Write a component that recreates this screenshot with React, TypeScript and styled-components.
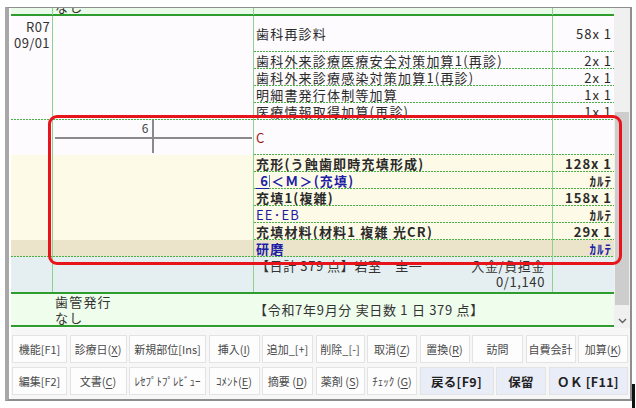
import React from "react";
import styled, { createGlobalStyle, css } from "styled-components";

const VLINE = "#8fd18f";
const THICK = "#2f9c2f";
const DASH = "#47b047";
const BLUE = "#1d1da6";

const GlobalStyle = createGlobalStyle`
  html, body { margin: 0; padding: 0; background: #ffffff; }
  body {
    font-family: "Noto Sans CJK JP", "Noto Sans", sans-serif;
    color: #2a2a2a;
  }
`;

const dashedBottom = css`
  background-image: repeating-linear-gradient(90deg, ${DASH} 0 2px, transparent 2px 3px);
  background-size: 100% 1px;
  background-position: left bottom;
  background-repeat: no-repeat;
`;

const Page = styled.div`
  position: relative;
  width: 636px;
  height: 408px;
  box-sizing: border-box;
  padding: 7px 0 0 5px;
  overflow: hidden;
`;

const Window = styled.div`
  width: 627px;
  height: 394px;
  box-sizing: border-box;
  border-top: 1px solid #8e8e8e;
  border-right: 2px solid #8e8e8e;
  border-bottom: 2px solid #8e8e8e;
  border-left: 4px solid #a8a8a8;
  padding-left: 2px;
  background: #ffffff;
  display: flex;
  flex-direction: column;
`;

const ListArea = styled.div`
  display: flex;
  height: 320px;
  flex-shrink: 0;
`;

const List = styled.div`
  flex: 1;
  overflow: hidden;
  background: #fdfbfd;
  font-size: 13px;
  line-height: 16px;
  letter-spacing: 1.2px;
  color: #2a2a2a;
`;

const Row = styled.div<{ $h: number; $bg: string; $dash?: boolean; $thick?: boolean; $top?: boolean }>`
  display: grid;
  grid-template-columns: 42px 201px 299px 1fr;
  height: ${(p) => p.$h}px;
  box-sizing: border-box;
  background-color: ${(p) => p.$bg};
  ${(p) => p.$dash && dashedBottom}
  ${(p) => p.$thick && css`border-bottom: 2px solid ${THICK};`}
  ${(p) => p.$top && css`margin-top: -25px;`}
`;

const DateCell = styled.div<{ $line?: boolean }>`
  border-right: ${(p) => (p.$line === false ? "none" : `1px solid ${VLINE}`)};
  text-align: right;
  padding: 3px 2px 0 0;
  letter-spacing: 0.4px;
  color: #333;
`;

const ChartCell = styled.div<{ $line?: boolean }>`
  border-right: ${(p) => (p.$line === false ? "none" : `1px solid ${VLINE}`)};
  padding-left: 2px;
  min-width: 0;
  color: #333;
`;

const ContentCell = styled.div<{ $dash?: boolean; $bold?: boolean; $color?: string; $line?: boolean }>`
  border-right: ${(p) => (p.$line === false ? "none" : `1px solid ${VLINE}`)};
  padding-left: 2px;
  display: flex;
  align-items: center;
  white-space: nowrap;
  overflow: hidden;
  font-weight: ${(p) => (p.$bold ? 700 : 400)};
  color: ${(p) => p.$color || "#2a2a2a"};
  ${(p) => p.$dash && dashedBottom}
`;

const PointsCell = styled.div<{ $dash?: boolean; $bold?: boolean; $color?: string }>`
  display: flex;
  align-items: center;
  justify-content: flex-end;
  padding-right: 2px;
  letter-spacing: 1px;
  white-space: pre;
  font-weight: ${(p) => (p.$bold ? 700 : 400)};
  color: ${(p) => p.$color || "#2a2a2a"};
  ${(p) => p.$dash && dashedBottom}
`;

const Chart = styled.div`
  display: grid;
  grid-template-columns: 1fr 1fr;
  grid-template-rows: 19px 14px;
  margin-right: 1px;
`;

const Quad = styled.div<{ $r?: boolean; $b?: boolean }>`
  border-right: ${(p) => (p.$r ? "2px solid #8a8a8a" : "none")};
  border-bottom: ${(p) => (p.$b ? "2px solid #8a8a8a" : "none")};
  display: flex;
  align-items: flex-end;
  justify-content: flex-end;
  padding: 0 3px 3px 0;
  font-size: 12px;
  line-height: 12px;
  letter-spacing: 0;
  color: #444;
`;

const Tooth = styled.span`
  text-decoration: underline;
  text-underline-offset: 2px;
`;

const Caret = styled.span`
  display: inline-block;
  width: 1px;
  height: 12px;
  margin: 0 1px 0 0;
  background: #6070b0;
`;

const SummaryBox = styled.div`
  display: flex;
  flex-direction: column;
  padding: 1px 7px 0 2px;
  border-right: 1px solid ${VLINE};
  color: #333;
  white-space: nowrap;
`;

const SummaryLine = styled.div<{ $end?: boolean }>`
  display: flex;
  justify-content: ${(p) => (p.$end ? "flex-end" : "space-between")};
  letter-spacing: 0.6px;
`;

const FooterText = styled.div`
  grid-column: span 2;
  display: flex;
  align-items: center;
  padding-left: 0;
  letter-spacing: 0.7px;
  color: #333;
  white-space: nowrap;
`;

const ScrollTrack = styled.div`
  width: 16px;
  background: #f0f0f0;
  display: flex;
  flex-direction: column;
  align-items: center;
`;

const ScrollThumb = styled.div`
  width: 14px;
  height: 193px;
  margin-top: 104px;
  background: #cdcdcd;
`;

const ScrollArrow = styled.div`
  margin-top: auto;
  margin-bottom: 3px;
  height: 8px;
  display: flex;
  align-items: center;
`;

const ButtonArea = styled.div`
  flex: 1;
  display: flex;
  flex-direction: column;
  gap: 4px;
  padding: 7px 0 0 1px;
  background: #f7f7f7;
`;

const ButtonRow = styled.div<{ $cols: string }>`
  display: grid;
  grid-template-columns: ${(p) => p.$cols};
  column-gap: 2.5px;
  height: 28px;
`;

const Btn = styled.div<{ $primary?: boolean }>`
  display: flex;
  align-items: center;
  justify-content: center;
  box-sizing: border-box;
  border: 1px solid #e3e3e3;
  background: ${(p) => (p.$primary ? "#e9edf8" : "#fdfdfd")};
  color: ${(p) => (p.$primary ? "#222" : "#4a4a4a")};
  font-size: ${(p) => (p.$primary ? 12.5 : 11)}px;
  font-weight: ${(p) => (p.$primary ? 700 : 400)};
  letter-spacing: ${(p) => (p.$primary ? "0.3px" : "0")};
  white-space: nowrap;
  overflow: hidden;
  u { text-underline-offset: 2px; }
`;

const RedFrame = styled.div`
  position: absolute;
  left: 48px;
  top: 115px;
  width: 574px;
  height: 150px;
  box-sizing: border-box;
  border: 3.5px solid #e8141c;
  border-radius: 9px;
  pointer-events: none;
`;

const EdgeMark = styled.div`
  position: absolute;
  left: 632px;
  top: 384px;
  width: 3px;
  height: 24px;
  background: #111;
`;

type Entry = { text: React.ReactNode; pts: string; h: number; bold?: boolean; color?: string };

const sectionA: Entry[] = [
  { text: "歯科再診料", pts: "58x 1", h: 36 },
  { text: "歯科外来診療医療安全対策加算1(再診)", pts: "2x 1", h: 17 },
  { text: "歯科外来診療感染対策加算1(再診)", pts: "2x 1", h: 17 },
  { text: "明細書発行体制等加算", pts: "1x 1", h: 17 },
];

const yellowRows: Entry[] = [
  { text: "充形(う蝕歯即時充填形成)", pts: "128x 1", h: 17, bold: true },
  {
    text: (
      <>
        <Tooth>&nbsp;6</Tooth>
        <Caret />＜Ｍ＞(充填)
      </>
    ),
    pts: "ｶﾙﾃ",
    h: 17,
    bold: true,
    color: BLUE,
  },
  { text: "充填1(複雑)", pts: "158x 1", h: 17, bold: true },
  { text: "EE･EB", pts: "ｶﾙﾃ", h: 17, color: BLUE },
  { text: "充填材料(材料1 複雑 光CR)", pts: "29x 1", h: 17, bold: true },
];

const row1 = "55px 57px 77px 51px 51px 49px 50px 50px 51px 50px 50px";
const row2 = "55px 57px 77px 51px 51px 49px 50px 74px 50px 79px";

export default function App() {
  return (
    <>
      <GlobalStyle />
      <Page>
        <Window>
          <ListArea>
            <List>
              <Row $h={33} $bg="#ebfbe9" $thick $top>
                <DateCell />
                <ChartCell>
                  <div>&nbsp;</div>
                  <div>なし</div>
                </ChartCell>
                <ContentCell />
                <PointsCell />
              </Row>

              {sectionA.map((e, i) => (
                <Row key={i} $h={e.h} $bg="#fdfbfd">
                  <DateCell>
                    {i === 0 && (
                      <>
                        R07
                        <br />
                        09/01
                      </>
                    )}
                  </DateCell>
                  <ChartCell />
                  <ContentCell $dash>{e.text}</ContentCell>
                  <PointsCell $dash>{e.pts}</PointsCell>
                </Row>
              ))}
              <Row $h={17} $bg="#fdfbfd" $dash>
                <DateCell />
                <ChartCell />
                <ContentCell>医療情報取得加算(再診)</ContentCell>
                <PointsCell>1x 1</PointsCell>
              </Row>

              <Row $h={35} $bg="#fdfbfd">
                <DateCell />
                <ChartCell>
                  <Chart>
                    <Quad $r $b>6</Quad>
                    <Quad $b />
                    <Quad $r />
                    <Quad />
                  </Chart>
                </ChartCell>
                <ContentCell $dash $color="#a01818">C</ContentCell>
                <PointsCell $dash />
              </Row>

              {yellowRows.map((e, i) => (
                <Row key={i} $h={17} $bg="#fdfbe7">
                  <DateCell />
                  <ChartCell />
                  <ContentCell $dash $bold={e.bold} $color={e.color}>
                    {e.text}
                  </ContentCell>
                  <PointsCell $dash $bold>
                    {e.pts}
                  </PointsCell>
                </Row>
              ))}

              <Row $h={17} $bg="#ebe4cb" $dash>
                <DateCell />
                <ChartCell />
                <ContentCell $bold $color={BLUE}>研磨</ContentCell>
                <PointsCell $bold $color={BLUE}>ｶﾙﾃ</PointsCell>
              </Row>

              <Row $h={37} $bg="#e5eff1" $thick>
                <DateCell />
                <ChartCell />
                <SummaryBox>
                  <SummaryLine>
                    <span>【日計 379 点】岩室　圭一</span>
                    <span>入金/負担金</span>
                  </SummaryLine>
                  <SummaryLine $end>0/1,140</SummaryLine>
                </SummaryBox>
                <PointsCell />
              </Row>

              <Row $h={33} $bg="#eefdec" $thick>
                <DateCell $line={false} />
                <ChartCell $line={false}>
                  <div>歯管発行</div>
                  <div>なし</div>
                </ChartCell>
                <FooterText>【令和7年9月分 実日数 1 日 379 点】</FooterText>
              </Row>
            </List>
            <ScrollTrack>
              <ScrollThumb />
              <ScrollArrow>
                <svg width="9" height="6" viewBox="0 0 9 6">
                  <path d="M1 1 L4.5 4.5 L8 1" fill="none" stroke="#606060" strokeWidth="1.4" />
                </svg>
              </ScrollArrow>
            </ScrollTrack>
          </ListArea>

          <ButtonArea>
            <ButtonRow $cols={row1}>
              <Btn>機能[F1]</Btn>
              <Btn>
                診療日(<u>X</u>)
              </Btn>
              <Btn>新規部位[Ins]</Btn>
              <Btn>
                挿入(<u>I</u>)
              </Btn>
              <Btn>追加_[+]</Btn>
              <Btn>削除_[-]</Btn>
              <Btn>
                取消(<u>Z</u>)
              </Btn>
              <Btn>
                置換(<u>R</u>)
              </Btn>
              <Btn>訪問</Btn>
              <Btn>自費会計</Btn>
              <Btn>
                加算(<u>K</u>)
              </Btn>
            </ButtonRow>
            <ButtonRow $cols={row2}>
              <Btn>編集[F2]</Btn>
              <Btn>
                文書(<u>C</u>)
              </Btn>
              <Btn>ﾚｾﾌﾟﾄﾌﾟﾚﾋﾞｭｰ</Btn>
              <Btn>
                ｺﾒﾝﾄ(<u>E</u>)
              </Btn>
              <Btn>
                摘要 (<u>D</u>)
              </Btn>
              <Btn>
                薬剤 (<u>S</u>)
              </Btn>
              <Btn>
                ﾁｪｯｸ (<u>G</u>)
              </Btn>
              <Btn $primary>戻る[F9]</Btn>
              <Btn $primary>保留</Btn>
              <Btn $primary>ＯＫ [F11]</Btn>
            </ButtonRow>
          </ButtonArea>
        </Window>
        <RedFrame />
        <EdgeMark />
      </Page>
    </>
  );
}
